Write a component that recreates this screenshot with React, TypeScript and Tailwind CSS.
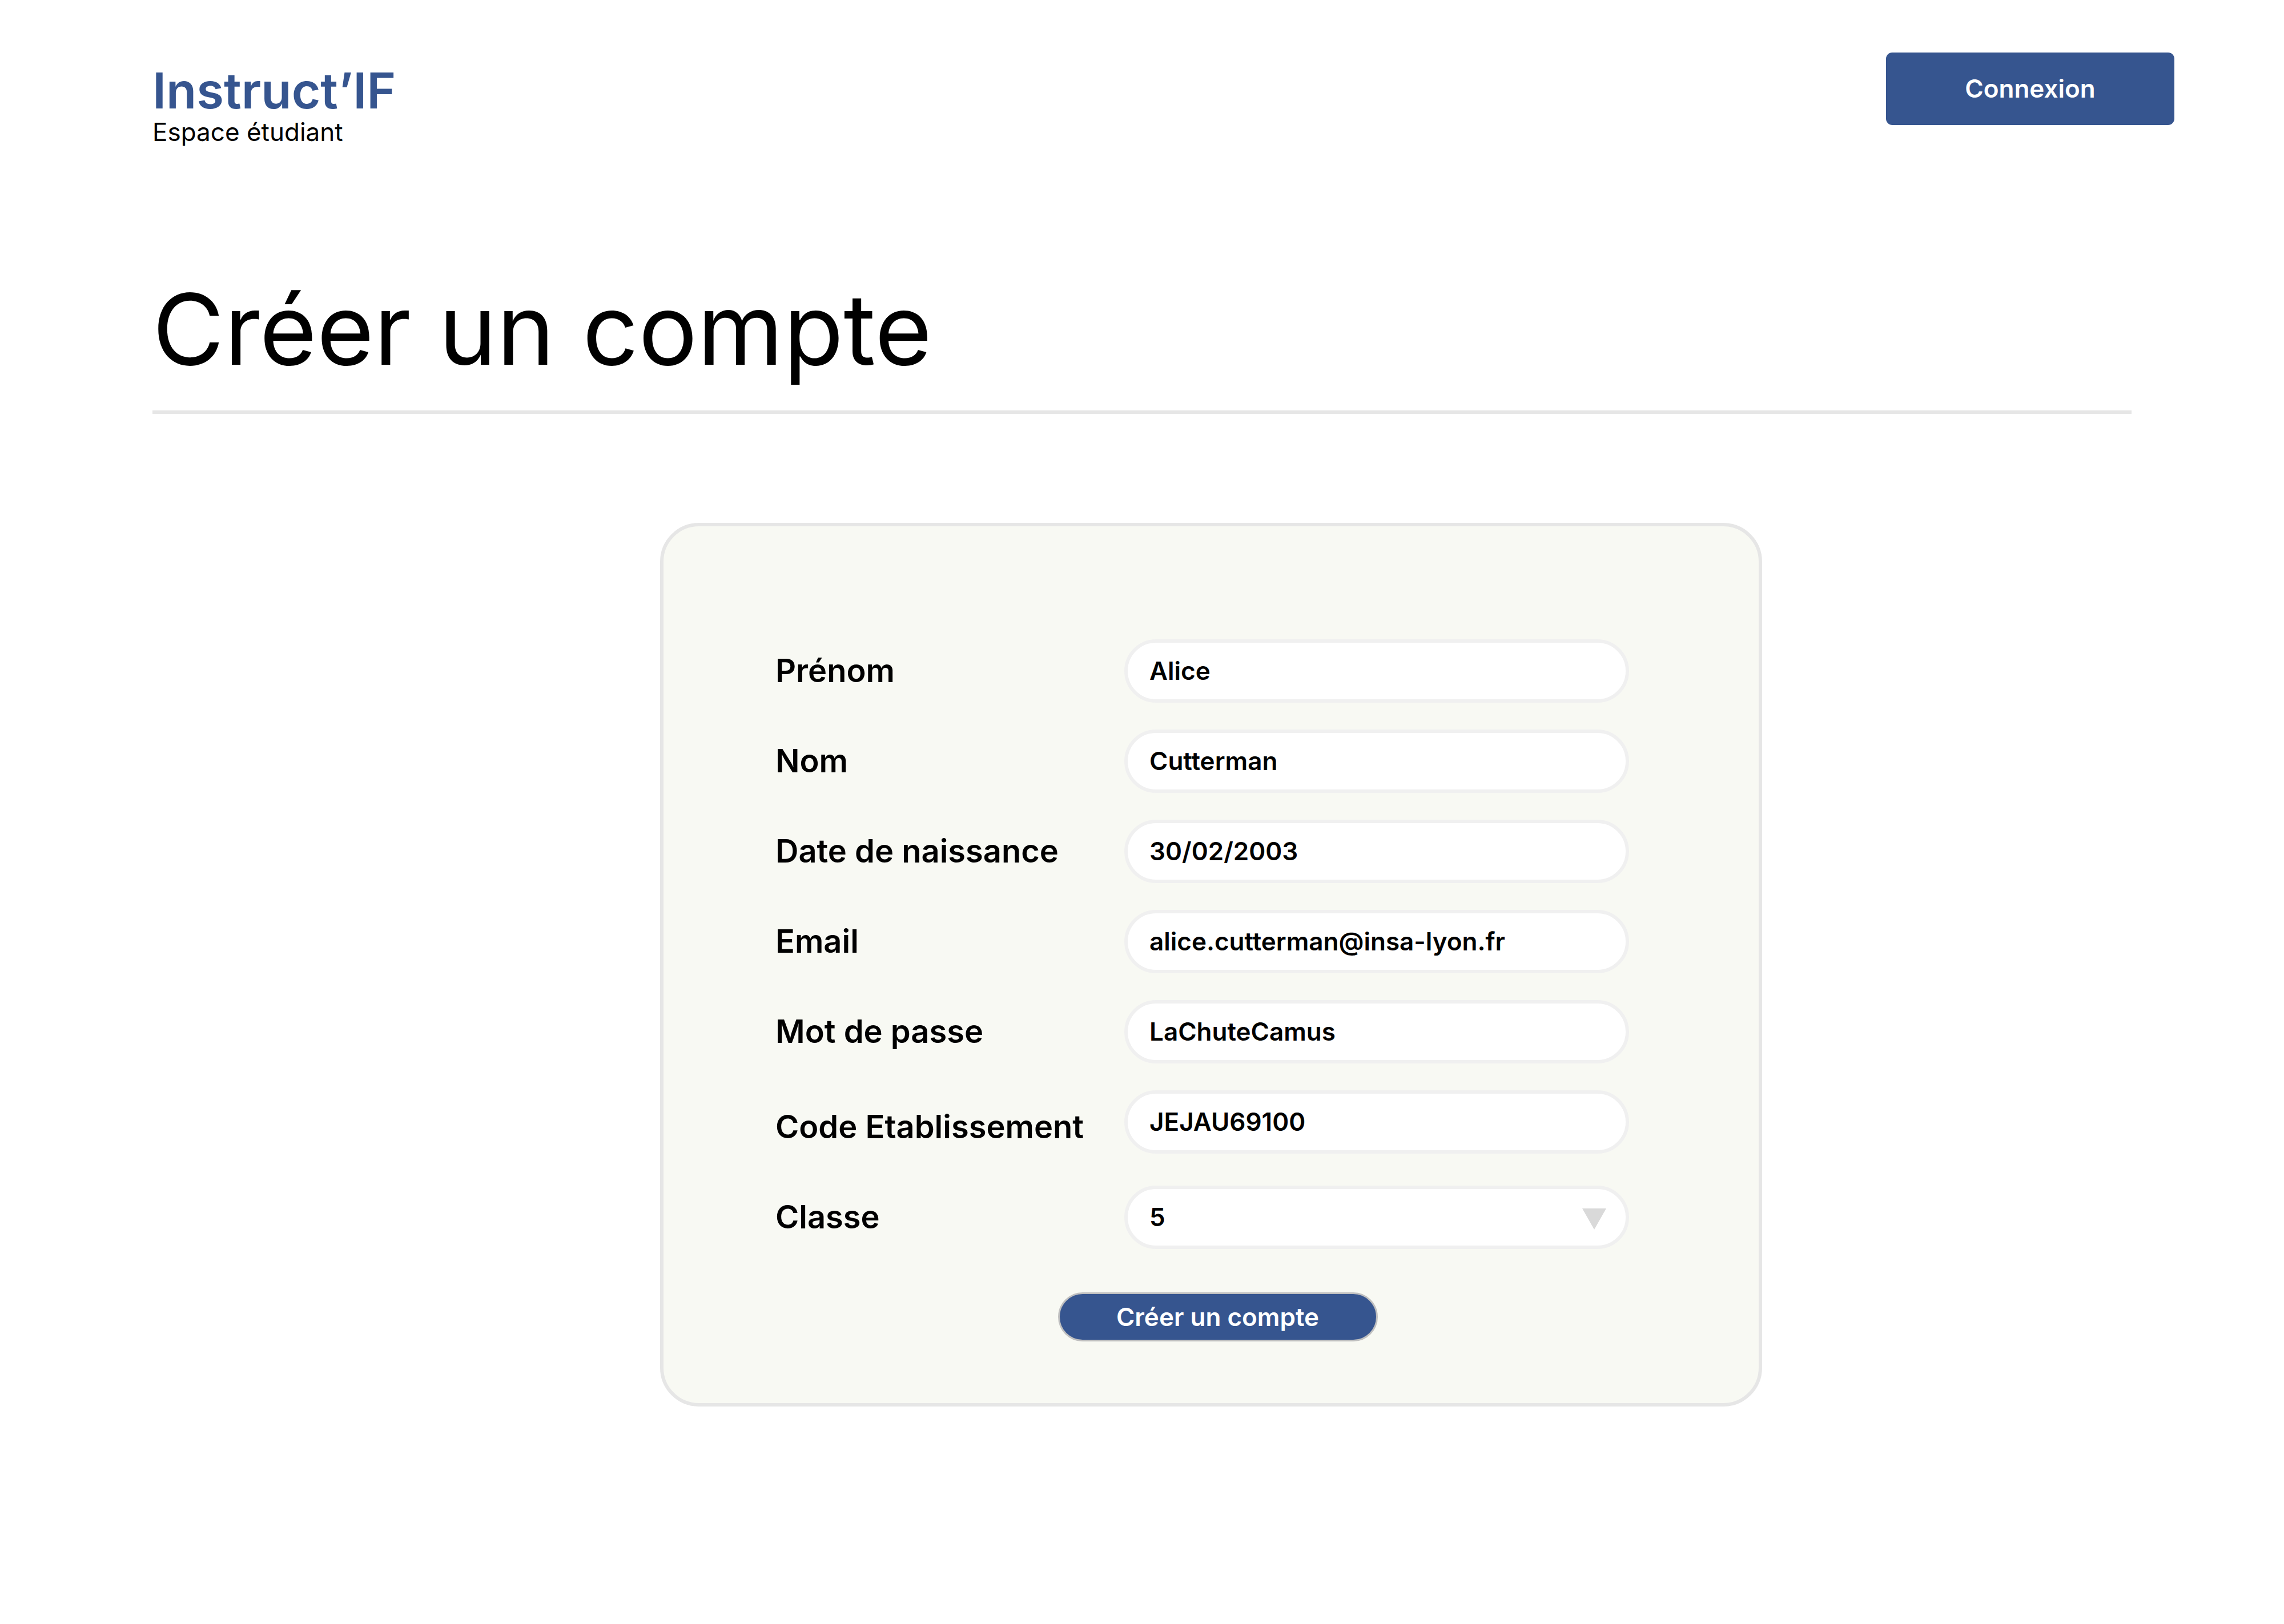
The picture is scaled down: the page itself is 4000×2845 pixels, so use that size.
import { useState } from "react";

type Field = { id: string; label: string; type: string; value: string };

const fields: Field[] = [
  { id: "prenom", label: "Prénom", type: "text", value: "Alice" },
  { id: "nom", label: "Nom", type: "text", value: "Cutterman" },
  { id: "naissance", label: "Date de naissance", type: "text", value: "30/02/2003" },
  { id: "email", label: "Email", type: "email", value: "alice.cutterman@insa-lyon.fr" },
  { id: "motdepasse", label: "Mot de passe", type: "text", value: "LaChuteCamus" },
];

const rowClass = "grid grid-cols-[611px_minmax(0,1fr)]";
const labelClass = "flex h-[111px] items-center self-end pb-[2px] text-[56px] font-semibold";
const controlClass =
  "h-[111px] w-full appearance-none rounded-full border-[6px] border-[#f0f0f0] bg-white px-[38px] pb-[2px] text-[44px] font-semibold outline-none";

function TextRow({ field }: { field: Field }) {
  const [value, setValue] = useState(field.value);
  return (
    <div className={rowClass}>
      <label htmlFor={field.id} className={labelClass}>
        {field.label}
      </label>
      <input
        id={field.id}
        type={field.type}
        value={value}
        onChange={(e) => setValue(e.target.value)}
        className={controlClass}
      />
    </div>
  );
}

function CodeRow() {
  const [value, setValue] = useState("JEJAU69100");
  return (
    <div className={`${rowClass} h-[120px]`}>
      <label htmlFor="code" className={labelClass}>
        Code Etablissement
      </label>
      <input
        id="code"
        type="text"
        value={value}
        onChange={(e) => setValue(e.target.value)}
        className={controlClass}
      />
    </div>
  );
}

function ClasseRow() {
  const [value, setValue] = useState("5");
  return (
    <div className={rowClass}>
      <label htmlFor="classe" className={labelClass}>
        Classe
      </label>
      <div className="relative">
        <select
          id="classe"
          value={value}
          onChange={(e) => setValue(e.target.value)}
          className={controlClass}
        >
          {["6", "5", "4", "3"].map((c) => (
            <option key={c}>{c}</option>
          ))}
        </select>
        <svg
          viewBox="0 0 42 37"
          className="pointer-events-none absolute right-10 top-10 h-[37px] w-[42px]"
          aria-hidden="true"
        >
          <path d="M0 0H42L21 37Z" fill="#d9d9d9" />
        </svg>
      </div>
    </div>
  );
}

export default function App() {
  return (
    <div className="min-h-screen bg-white font-['Inter',sans-serif] text-black">
      <header className="flex items-start justify-between pl-[267px] pr-48 pt-[92px]">
        <div className="pt-[17px]">
          <a
            href="#"
            className="block text-[87px] leading-[100px] font-semibold text-[#36558f]"
          >
            Instruct’IF
          </a>
          <p className="text-[44px] leading-[44px]">Espace étudiant</p>
        </div>
        <button
          type="button"
          className="h-[127px] w-[505px] rounded-[11px] bg-[#36558f] pb-[2px] text-[44px] font-semibold text-white"
        >
          Connexion
        </button>
      </header>

      <main className="px-[267px] pt-[215px]">
        <h1 className="text-[172px] leading-[216px]">Créer un compte</h1>
        <hr className="mt-[35px] border-t-[6px] border-[#e6e6e6]" />

        <div className="flex justify-center pl-[242px] pt-[191px]">
          <form
            className="w-[1930px] max-w-full rounded-[68px] border-[6px] border-[#e6e6e6] bg-[#f8f9f3] pb-[108px] pl-[196px] pr-[227px] pt-[198px]"
            onSubmit={(e) => e.preventDefault()}
          >
            <div className="flex flex-col gap-[47px]">
              {fields.map((f) => (
                <TextRow key={f.id} field={f} />
              ))}
              <CodeRow />
              <ClasseRow />
            </div>
            <div className="flex justify-center pl-[54px] pt-[76px]">
              <button
                type="submit"
                className="h-[86px] w-[560px] rounded-full border-[3px] border-[#c0c0c0] bg-[#36558f] text-[44px] font-semibold text-white"
              >
                Créer un compte
              </button>
            </div>
          </form>
        </div>
      </main>
    </div>
  );
}
